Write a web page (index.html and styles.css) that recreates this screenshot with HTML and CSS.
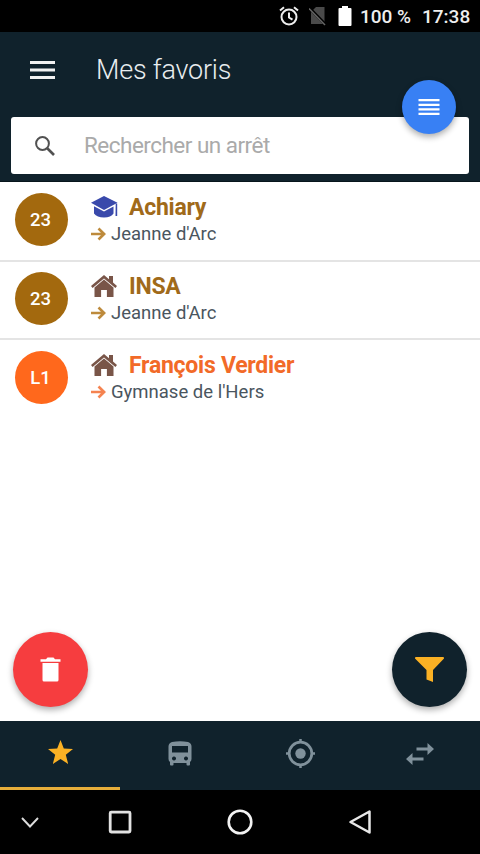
FILE: index.html
```html
<!DOCTYPE html>
<html lang="fr">
<head>
<meta charset="utf-8">
<title>Mes favoris</title>
<link rel="stylesheet" href="styles.css">
</head>
<body>
<svg class="defs" width="0" height="0">
  <symbol id="house" viewBox="0 0 26 22">
    <path d="M13 4.600 22.500 12.400V22h-6.600v-7h-5.800v7H3.500v-9.600z"/>
    <path d="M13 0l5 4.200V1h4v6.600L26 11l-1.600 1.900L13 3.400 1.600 12.900 0 11z"/>
  </symbol>
  <symbol id="arrow" viewBox="0 0 16 14">
    <path d="M0 7h14M8 1.200 14 7l-6 5.800" fill="none" stroke="currentColor" stroke-width="2.800"/>
  </symbol>
</svg>
<div class="status">
  <svg class="alarm" width="20" height="20" viewBox="0 0 20 20" fill="none" stroke="#eee" stroke-width="2"><circle cx="10" cy="11" r="7.500"/><path d="M10 6.500V11.500l3.500 2.200M1 4.500 5 1.200M15 1.200l4 3.300" stroke-width="2"/></svg>
  <svg class="nosim" width="18" height="20" viewBox="0 0 18 20"><path d="M7 1h8.500v17H2V6z" fill="#4a4a4a"/><path d="M0 1.500 17 19" stroke="#000" stroke-width="3"/><path d="M0 2.500 16 19" stroke="#666" stroke-width="1.500"/></svg>
  <svg class="battery" width="14" height="20" viewBox="0 0 14 20"><path d="M4 0h6v2h2.500q1 0 1 1v16q0 1-1 1h-11q-1 0-1-1V3q0-1 1-1H4z" fill="#fff"/></svg>
  <span class="percent">100 %</span><span class="time">17:38</span>
</div>
<header class="header">
  <div class="toolbar">
    <svg width="25" height="18" viewBox="0 0 25 18"><path d="M0 1.500h25M0 9h25M0 16.500h25" stroke="#f2f2f2" stroke-width="3"/></svg>
    <h1>Mes favoris</h1>
  </div>
  <div class="search">
    <svg width="20" height="20" viewBox="0 0 20 20" fill="none" stroke="#515151"><circle cx="7.500" cy="7.500" r="6.400" stroke-width="2"/><path d="m12 12 7 7" stroke-width="2.700"/></svg>
    <span>Rechercher un arrêt</span>
    <div class="fab order"><svg width="22" height="18" viewBox="0 0 22 18"><path d="M.5 2.200h21M.5 6.800h21M.5 11.300h21M.5 15.800h21" stroke="#fff" stroke-width="2.200"/></svg></div>
  </div>
</header>
<main>
  <div class="row brown first">
    <div class="badge">23</div>
    <div class="info">
      <div class="stop"><svg class="cap" width="27" height="22" viewBox="0 0 27 22" fill="#3949ab"><path d="M13 0 26.500 6.700 13 14 0 6.700z"/><path d="M3 10.200 13 15.600 22.500 10.400V17.500Q20 21.500 13 21.500T3 17.500zM24.700 7.500h1.500V20h-1.700z"/></svg><span>Achiary</span></div>
      <div class="dest"><svg width="15" height="14"><use href="#arrow"/></svg><span>Jeanne d'Arc</span></div>
    </div>
  </div>
  <div class="row brown">
    <div class="badge">23</div>
    <div class="info">
      <div class="stop"><svg class="house" width="26" height="22"><use href="#house"/></svg><span>INSA</span></div>
      <div class="dest"><svg width="15" height="14"><use href="#arrow"/></svg><span>Jeanne d'Arc</span></div>
    </div>
  </div>
  <div class="row orange">
    <div class="badge">L1</div>
    <div class="info">
      <div class="stop"><svg class="house" width="26" height="22"><use href="#house"/></svg><span>François Verdier</span></div>
      <div class="dest"><svg width="15" height="14"><use href="#arrow"/></svg><span>Gymnase de l'Hers</span></div>
    </div>
  </div>
  <div class="actions">
    <div class="fab big red"><svg width="21" height="25" viewBox="0 0 21 25" fill="#fff"><path d="M.5 2.300H6L7.500.5h6L15 2.300h5.500v2.500H.5zM2.500 6h16v17q0 1.500-1.500 1.500H4Q2.500 24.500 2.500 23z"/></svg></div>
    <div class="fab big dark"><svg width="29" height="25" viewBox="0 0 29 25" fill="#fbb124"><path d="M1 0h27q1.200 0 1 1.500L18 13v12l-6.500-2.500V13L0 1.500Q-.2 0 1 0z"/></svg></div>
  </div>
</main>
<nav class="tabs">
  <div class="tab active"><svg width="25" height="24" viewBox="0 0 25 24" fill="#fbb124"><path d="m12.500 0 3.300 8.500 9.200.5-7.200 5.800L20.200 24l-7.700-5L4.800 24l2.400-9.200L0 9l9.200-.5z"/></svg></div>
  <div class="tab"><svg width="24" height="25" viewBox="0 0 24 25"><path fill-rule="evenodd" d="M4 1Q12-.7 20 1q3.500 1 3.500 4.500V18q0 2-1.500 3v2.500q0 1-1 1h-1.500q-1 0-1-1V22h-13v1.500q0 1-1 1H3q-1 0-1-1V21Q.5 20 .5 18V5.500Q.5 2 4 1zM4 5v6.500h16V5zM6 15.500a2 2 0 1 0 .01 0zM18 15.500a2 2 0 1 0 .01 0z"/></svg></div>
  <div class="tab"><svg width="29" height="29" viewBox="0 0 29 29"><circle cx="14.500" cy="14.500" r="5.200"/><path d="M14.500 0v4M14.500 25v4M0 14.500h4M25 14.500h4" stroke="#80919b" stroke-width="2.500"/><circle cx="14.500" cy="14.500" r="11.300" fill="none" stroke="#80919b" stroke-width="2.700"/></svg></div>
  <div class="tab"><svg width="28" height="22" viewBox="0 0 28 22"><path d="M21.500 0 28 6l-6.500 6V7.500h-11v-3h11zM6.500 10v4.500h11v3h-11V22L0 16z"/></svg></div>
</nav>
<footer class="system">
  <svg width="60" height="64" viewBox="0 0 60 64" fill="none" stroke="#ddd" stroke-width="1.900"><path d="m22 28 8 8.500 8-8.500"/></svg>
  <svg width="120" height="64" viewBox="0 0 120 64" fill="none" stroke="#e2e2e2" stroke-width="2.800"><rect x="50.200" y="22.200" width="19.800" height="19.800" rx="1"/></svg>
  <svg width="120" height="64" viewBox="0 0 120 64" fill="none" stroke="#f2f2f2" stroke-width="2.600"><circle cx="60" cy="32" r="11.300"/></svg>
  <svg width="120" height="64" viewBox="0 0 120 64" fill="none" stroke="#e8e8e8" stroke-width="2.500" stroke-linejoin="round"><path d="M69.500 21.500v21L50.500 32z"/></svg>
</footer>
</body>
</html>
```
FILE: styles.css
```css
* { box-sizing: border-box; }
body {
  margin: 0;
  height: 854px;
  display: flex;
  flex-direction: column;
  overflow: hidden;
  background: #fff;
  font-family: Roboto, "Liberation Sans", sans-serif;
}
svg { display: block; flex: none; }
.defs { display: none; }
.status {
  height: 32px;
  padding-right: 10px;
  background: #000;
  color: #eee;
  display: flex;
  align-items: center;
  justify-content: flex-end;
  font-size: 19px;
  font-weight: 500;
  white-space: nowrap;
}
.nosim { margin-left: 10px; }
.battery { margin: 0 8px 0 11px; }
.percent { width: 50px; }
.time { margin-left: 12px; width: 48px; }
.header {
  height: 150px;
  padding: 0 11px;
  background: #10222c;
  border-bottom: 1px solid #08151c;
}
.toolbar {
  height: 85px;
  padding: 0 0 10px 19px;
  display: flex;
  align-items: center;
}
h1 {
  margin: 0 0 0 41px;
  color: #e8edef;
  font-size: 27px;
  letter-spacing: -.22px;
  font-weight: 300;
  line-height: 32px;
  white-space: nowrap;
}
.search {
  position: relative;
  height: 57px;
  padding-left: 24px;
  display: flex;
  align-items: center;
  border-radius: 3px;
  background: #fff;
  color: #aaa;
  font-size: 22.500px;
  letter-spacing: -.52px;
  white-space: nowrap;
}
.search > span { margin-left: 29px; padding-bottom: 2px; line-height: 28px; }
.fab {
  display: flex;
  align-items: center;
  justify-content: center;
  border-radius: 50%;
  box-shadow: 0 3px 6px rgba(0, 0, 0, .32);
}
.order {
  position: absolute;
  top: -37px;
  right: 13px;
  width: 54px;
  height: 54px;
  background: #3880f4;
}
main { flex: 1; display: flex; flex-direction: column; }
.row {
  height: 79px;
  padding: 11px 15px 0;
  display: flex;
  border-bottom: 2px solid #e4e4e4;
}
.row.first { height: 80px; }
.row.first + .row { height: 78px; padding-top: 10px; }
.row.orange { border: 0; }
.badge {
  width: 53px;
  height: 53px;
  border-radius: 50%;
  display: flex;
  align-items: center;
  justify-content: center;
  padding-right: 2px;
  color: #fff;
  font-size: 18.500px;
  font-weight: 500;
}
.brown .badge { background: #a3690e; }
.orange .badge { background: #ff681c; }
.info { margin-left: 23px; white-space: nowrap; }
.stop {
  height: 28px;
  display: flex;
  align-items: center;
  font-size: 23px;
  letter-spacing: -.25px;
  font-weight: 700;
}
.stop span { margin-left: 12px; }
.cap { margin-right: -1px; }
.house { fill: #795548; }
.brown .stop { color: #a06a1a; }
.orange .stop { color: #f26a28; }
.dest {
  height: 26px;
  display: flex;
  align-items: center;
  color: #4a555e;
  font-size: 18.500px;
}
.dest span { margin-left: 5px; }
.brown .dest svg { color: #bd8a3c; }
.orange .dest svg { color: #f58350; }
.actions {
  margin-top: auto;
  padding: 0 13px 14px;
  display: flex;
  justify-content: space-between;
}
.big { width: 75px; height: 75px; }
.red { background: #f63d3f; }
.dark { background: #10222c; }
.tabs {
  height: 69px;
  display: flex;
  background: #10222c;
}
.tab {
  width: 120px;
  padding-bottom: 4px;
  display: flex;
  align-items: center;
  justify-content: center;
  fill: #80919b;
}
.tab.active { padding-bottom: 5px; border-bottom: 3px solid #e6ae3a; }
.system { height: 64px; display: flex; background: #000; }
```
